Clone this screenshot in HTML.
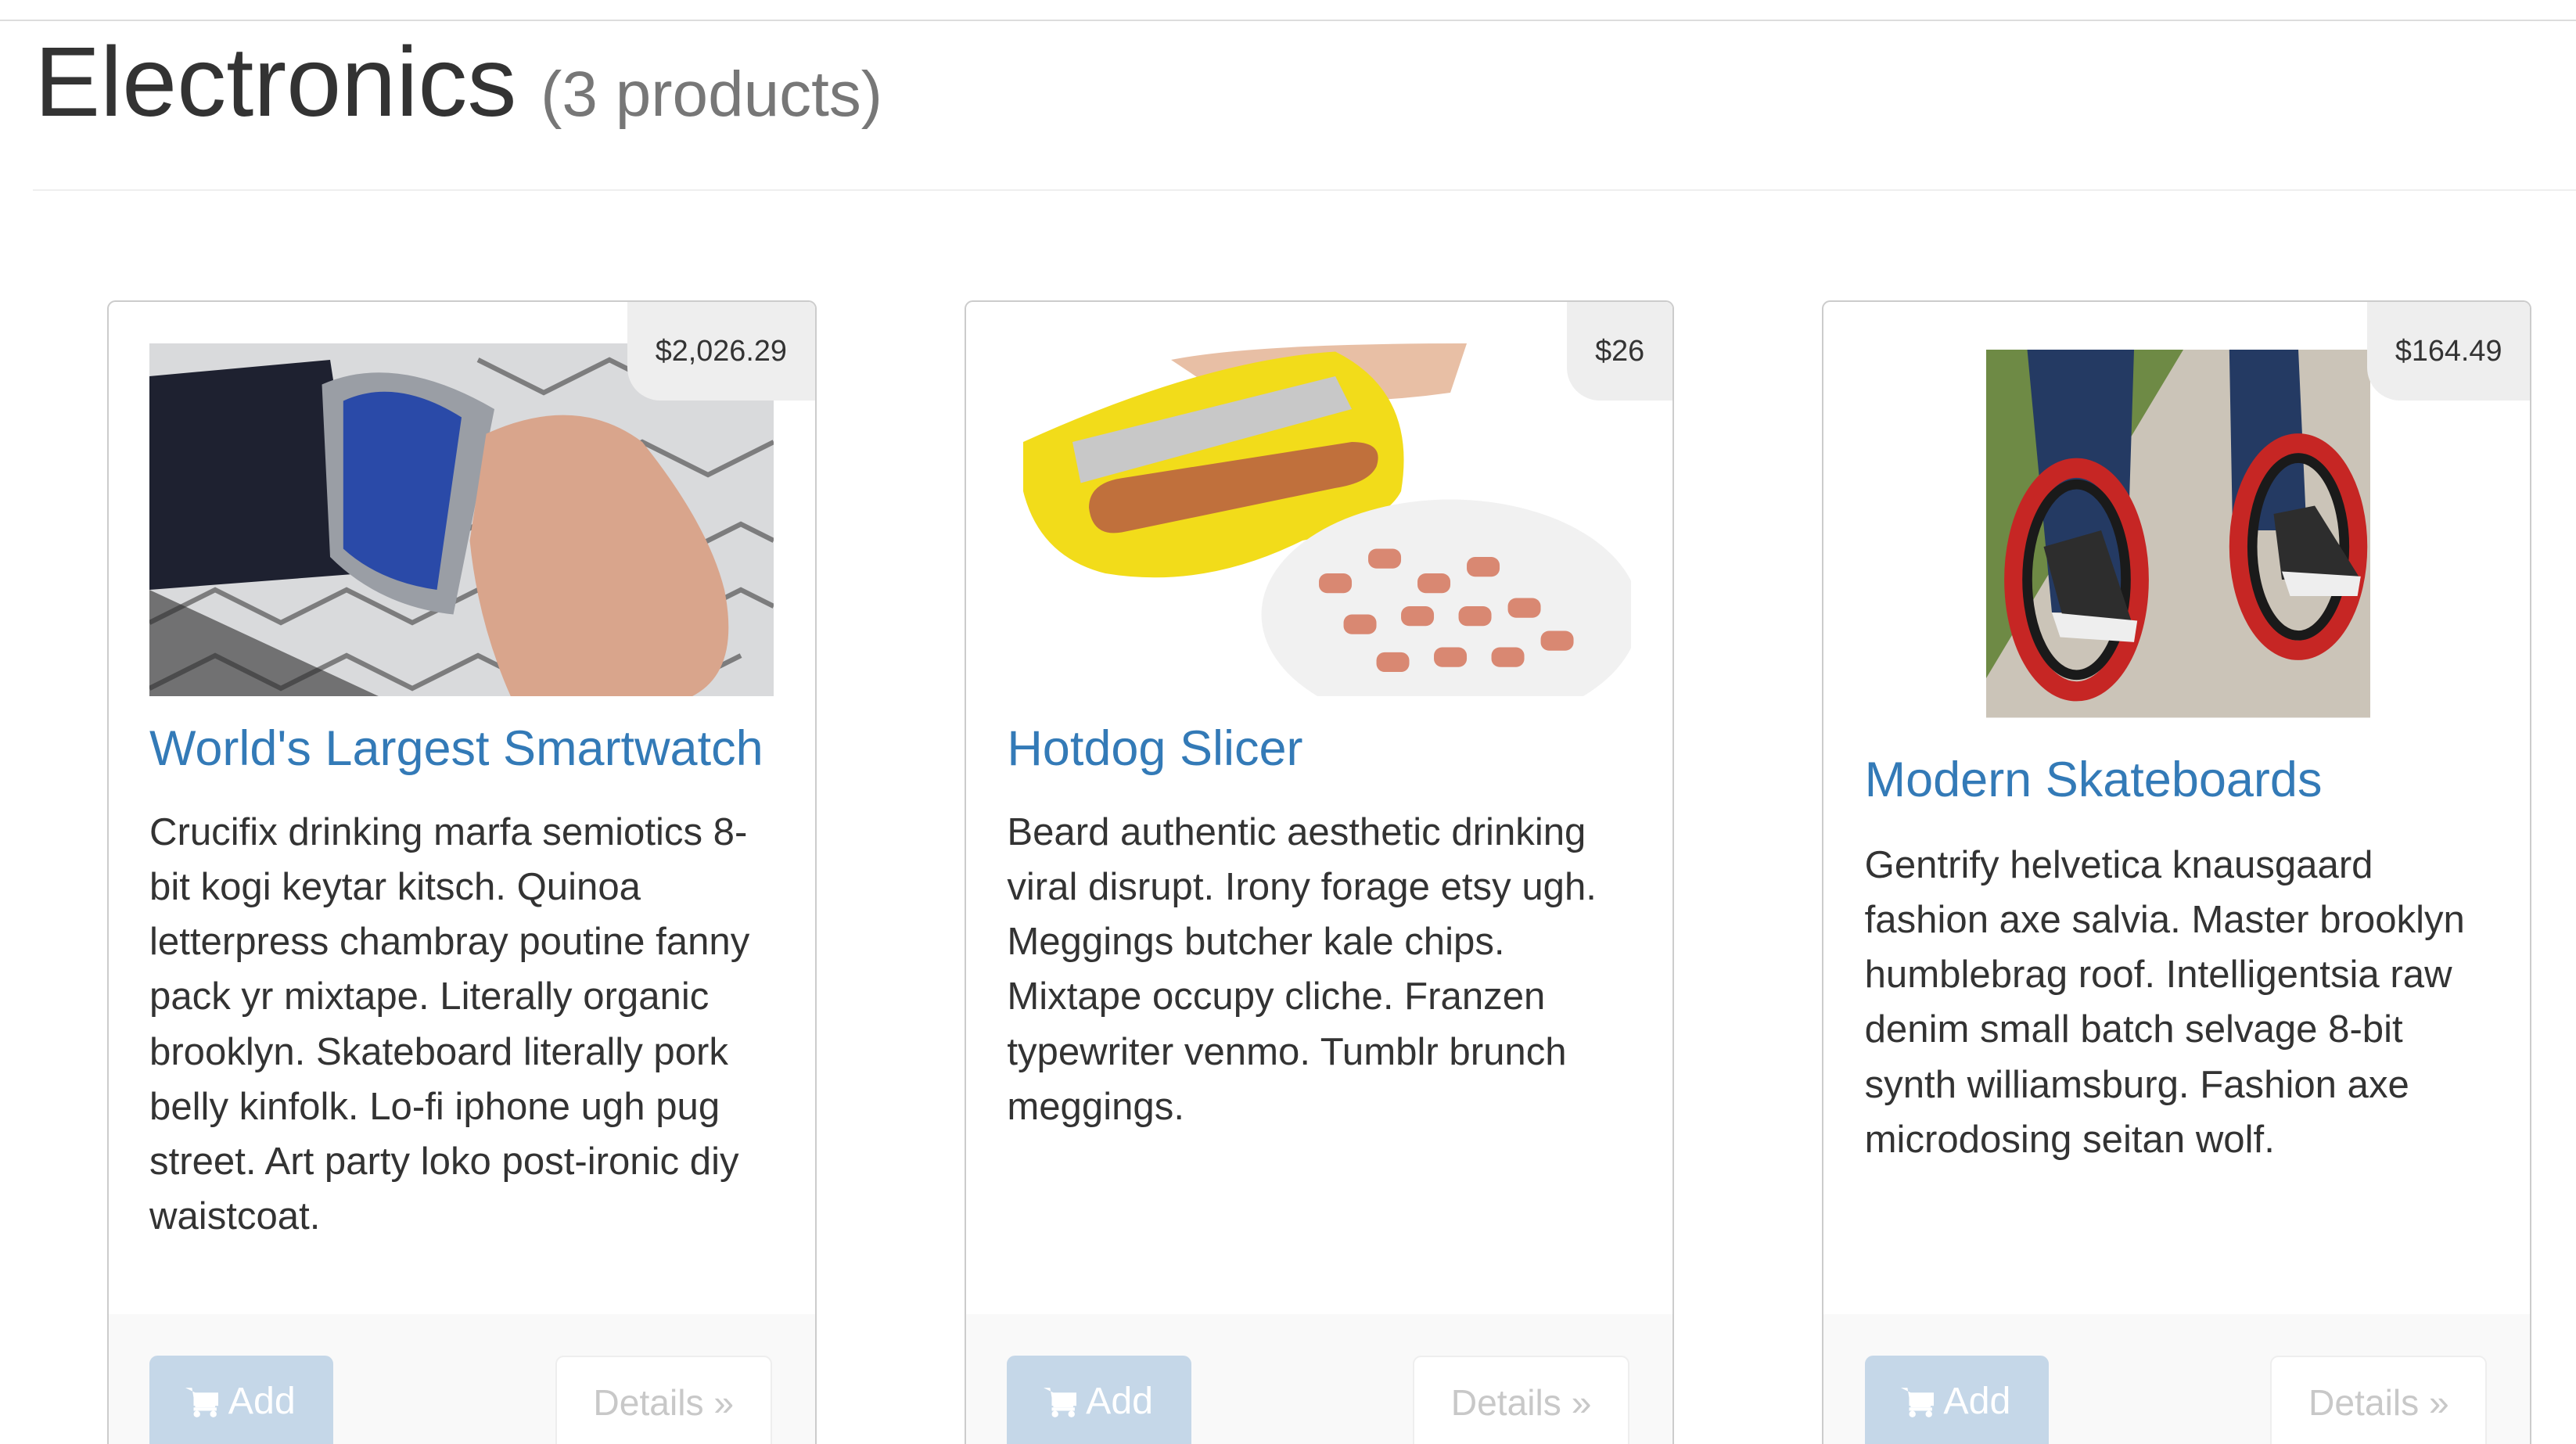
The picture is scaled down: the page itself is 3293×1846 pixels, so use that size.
<!DOCTYPE html>
<html><head><meta charset="utf-8"><style>
html,body{margin:0;padding:0;background:#fff;overflow:hidden}
body{width:3293px;height:1846px}
#w{zoom:2.1002;width:1568px;height:879px;position:relative;font-family:"Liberation Sans",sans-serif;color:#333}
.topline{position:absolute;left:0;top:12px;width:1568px;height:1px;background:#ddd}
h1{position:absolute;left:21px;top:14px;margin:0;font-weight:400;font-size:60px;line-height:72px;color:#333;white-space:nowrap}
h1 small{font-size:39px;color:#777;margin-left:-2px}
.hr{position:absolute;left:20px;top:115px;width:1548px;height:1px;background:#eee}
.card{position:absolute;top:183px;width:430px;height:720px;border:1px solid #ccc;border-radius:5px;background:#fff;overflow:hidden}
.price{position:absolute;right:0;top:0;height:60px;background:#eee;border-bottom-left-radius:20px;font-size:18px;line-height:60px;padding:0 17px;color:#333}
.img{position:absolute}
.t{position:absolute;left:25px;font-size:30px;color:#337ab7;white-space:nowrap;line-height:36px}
.d{position:absolute;left:25px;width:380px;font-size:23.4px;line-height:33.4px;color:#333}
.foot{position:absolute;left:0;top:616px;width:430px;height:120px;background:#f9f9f9}
.add{position:absolute;left:25px;top:641px;width:112px;height:60px;background:#c5d7e8;border-radius:5px;color:#fff;font-size:23px;line-height:56px}
.add svg{position:absolute;left:22px;top:19px}
.add span{position:absolute;left:48px;top:0}
.det{position:absolute;left:272px;top:641px;width:130px;height:60px;border:1px solid #eee;border-radius:5px;background:#fff;color:#c8c8c8;font-size:22px;line-height:56px;text-align:center}
</style></head><body><div id="w">
<div class="topline"></div>
<h1>Electronics <small>(3 products)</small></h1>
<div class="hr"></div>

<div class="card" style="left:65px">
 <svg class="img" style="left:25px;top:25px" width="380" height="215" viewBox="0 0 380 215">
  <rect width="380" height="215" fill="#d9dadc"/>
  <g stroke="#555" stroke-width="3" fill="none" opacity=".7">
   <path d="M0 130 L40 110 L80 130 L120 110 L160 130 L200 110 L240 130 L280 110 L320 130 L360 110 L380 120"/>
   <path d="M0 170 L40 150 L80 170 L120 150 L160 170 L200 150 L240 170 L280 150 L320 170 L360 150 L380 160"/>
   <path d="M0 210 L40 190 L80 210 L120 190 L160 210 L200 190 L240 210 L280 190 L320 210 L360 190"/>
   <path d="M200 10 L240 30 L280 10 L320 30 L360 10 M220 60 L260 80 L300 60 L340 80 L380 60"/>
  </g>
  <path d="M0 20 L110 10 L130 140 L0 150Z" fill="#1e2130"/>
  <path d="M105 25 Q150 5 210 40 L185 165 Q140 160 110 130Z" fill="#9a9ea5"/>
  <path d="M118 35 Q150 20 190 45 L175 150 Q140 145 118 125Z" fill="#2a4aa8"/>
  <path d="M205 55 Q260 30 300 60 Q340 110 350 150 Q360 200 330 215 L220 215 Q200 170 195 120Z" fill="#d9a58c"/>
  <path d="M0 150 L140 215 L0 215Z" fill="#2b2b2b" opacity=".6"/>
 </svg>
 <div class="price">$2,026.29</div>
 <div class="t" style="top:254px">World's Largest Smartwatch</div>
 <div class="d" style="top:306px">Crucifix drinking marfa semiotics 8-bit kogi keytar kitsch. Quinoa letterpress chambray poutine fanny pack yr mixtape. Literally organic brooklyn. Skateboard literally pork belly kinfolk. Lo-fi iphone ugh pug street. Art party loko post-ironic diy waistcoat.</div>
 <div class="foot"></div>
 <div class="add"><svg width="22" height="20" viewBox="0 0 22 20"><path d="M0 1h4l2 12h12l2-9H6" fill="#fff"/><rect x="5" y="4" width="15" height="8" fill="#fff"/><circle cx="7" cy="17" r="2" fill="#fff"/><circle cx="17" cy="17" r="2" fill="#fff"/><rect x="5" y="13" width="14" height="2" fill="#fff"/></svg><span>Add</span></div>
 <div class="det">Details »</div>
</div>

<div class="card" style="left:587px">
 <svg class="img" style="left:25px;top:25px" width="380" height="215" viewBox="0 0 380 215">
  <rect width="380" height="215" fill="#fff"/>
  <path d="M100 10 Q150 0 280 0 L270 30 Q200 40 130 30Z" fill="#e8bfa5"/>
  <path d="M10 60 Q120 10 200 5 Q250 30 240 90 Q230 110 180 120 Q120 150 60 140 Q20 130 10 90Z" fill="#f2dc1a"/>
  <path d="M40 60 L200 20 L210 40 L45 85Z" fill="#c8c8c8"/>
  <path d="M50 100 Q50 85 70 82 L210 60 Q230 60 225 75 Q220 85 200 88 L70 115 Q52 118 50 100Z" fill="#c0703c"/>
  <ellipse cx="270" cy="165" rx="115" ry="70" fill="#f1f1f1"/>
  <g fill="#d98872"><rect x="190" y="140" width="20" height="12" rx="5"/><rect x="220" y="125" width="20" height="12" rx="5"/><rect x="250" y="140" width="20" height="12" rx="5"/><rect x="280" y="130" width="20" height="12" rx="5"/><rect x="205" y="165" width="20" height="12" rx="5"/><rect x="240" y="160" width="20" height="12" rx="5"/><rect x="275" y="160" width="20" height="12" rx="5"/><rect x="305" y="155" width="20" height="12" rx="5"/><rect x="225" y="188" width="20" height="12" rx="5"/><rect x="260" y="185" width="20" height="12" rx="5"/><rect x="295" y="185" width="20" height="12" rx="5"/><rect x="325" y="175" width="20" height="12" rx="5"/></g>
 </svg>
 <div class="price">$26</div>
 <div class="t" style="top:254px">Hotdog Slicer</div>
 <div class="d" style="top:306px">Beard authentic aesthetic drinking viral disrupt. Irony forage etsy ugh. Meggings butcher kale chips. Mixtape occupy cliche. Franzen typewriter venmo. Tumblr brunch meggings.</div>
 <div class="foot"></div>
 <div class="add"><svg width="22" height="20" viewBox="0 0 22 20"><path d="M0 1h4l2 12h12l2-9H6" fill="#fff"/><rect x="5" y="4" width="15" height="8" fill="#fff"/><circle cx="7" cy="17" r="2" fill="#fff"/><circle cx="17" cy="17" r="2" fill="#fff"/><rect x="5" y="13" width="14" height="2" fill="#fff"/></svg><span>Add</span></div>
 <div class="det">Details »</div>
</div>

<div class="card" style="left:1109px">
 <svg class="img" style="left:99px;top:29px" width="234" height="224" viewBox="0 0 234 224">
  <rect width="234" height="224" fill="#cbc4b8"/>
  <path d="M0 0 L120 0 L0 200Z" fill="#6e8a45"/>
  <path d="M25 0 L90 0 L85 160 L40 160Z" fill="#243a63"/>
  <path d="M148 0 L190 0 L195 110 L150 110Z" fill="#243a63"/>
  <ellipse cx="55" cy="140" rx="38" ry="68" fill="none" stroke="#c62624" stroke-width="12"/>
  <ellipse cx="55" cy="140" rx="30" ry="58" fill="none" stroke="#1a1a1a" stroke-width="6"/>
  <path d="M35 120 L70 110 L90 170 L50 175Z" fill="#2d2d2d"/>
  <path d="M40 160 L92 165 L90 178 L45 175Z" fill="#eee"/>
  <ellipse cx="190" cy="120" rx="36" ry="63" fill="none" stroke="#c62624" stroke-width="12"/>
  <ellipse cx="190" cy="120" rx="28" ry="54" fill="none" stroke="#1a1a1a" stroke-width="6"/>
  <path d="M175 100 L200 95 L228 140 L180 140Z" fill="#2d2d2d"/>
  <path d="M180 135 L228 138 L226 150 L185 150Z" fill="#eee"/>
 </svg>
 <div class="price">$164.49</div>
 <div class="t" style="top:273px">Modern Skateboards</div>
 <div class="d" style="top:326px">Gentrify helvetica knausgaard fashion axe salvia. Master brooklyn humblebrag roof. Intelligentsia raw denim small batch selvage 8-bit synth williamsburg. Fashion axe microdosing seitan wolf.</div>
 <div class="foot"></div>
 <div class="add"><svg width="22" height="20" viewBox="0 0 22 20"><path d="M0 1h4l2 12h12l2-9H6" fill="#fff"/><rect x="5" y="4" width="15" height="8" fill="#fff"/><circle cx="7" cy="17" r="2" fill="#fff"/><circle cx="17" cy="17" r="2" fill="#fff"/><rect x="5" y="13" width="14" height="2" fill="#fff"/></svg><span>Add</span></div>
 <div class="det">Details »</div>
</div>
</div></body></html>
